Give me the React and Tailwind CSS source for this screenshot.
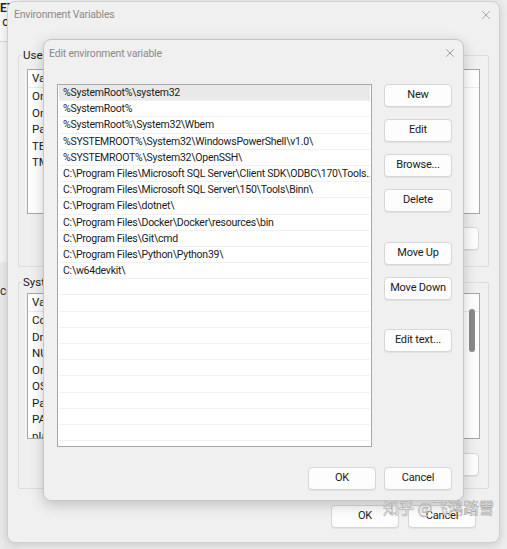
import { X } from 'lucide-react';

const paths = [
    '%SystemRoot%\\system32',
    '%SystemRoot%',
    '%SystemRoot%\\System32\\Wbem',
    '%SYSTEMROOT%\\System32\\WindowsPowerShell\\v1.0\\',
    '%SYSTEMROOT%\\System32\\OpenSSH\\',
    'C:\\Program Files\\Microsoft SQL Server\\Client SDK\\ODBC\\170\\Tools...',
    'C:\\Program Files\\Microsoft SQL Server\\150\\Tools\\Binn\\',
    'C:\\Program Files\\dotnet\\',
    'C:\\Program Files\\Docker\\Docker\\resources\\bin',
    'C:\\Program Files\\Git\\cmd',
    'C:\\Program Files\\Python\\Python39\\',
    'C:\\w64devkit\\',
];

const userVars = ['OneDrive', 'OneDriveConsumer', 'Path', 'TEMP', 'TMP'];
const sysVars = ['ComSpec', 'DriverData', 'NUMBER_OF_PROCESSORS', 'OnlineServices', 'OS', 'Path', 'PATHEXT', 'platformcode'];

function Btn({ children, className = '' }) {
    return (
        <button className={`h-[23px] w-[68px] rounded-[4px] border border-[#d6d6d6] bg-[#fdfdfd] text-[11px] tracking-[-0.2px] text-[#1b1b1b] shadow-[0_1px_0_#e2e2e2] ${className}`}>
            {children}
        </button>
    );
}

function VarList({ vars, heightClass, scroll }) {
    return (
        <div className={`relative ${heightClass} overflow-hidden border border-[#a8a8a8] bg-white`}>
            <div className="flex h-[18px] items-end border-b border-[#ececec] pl-[4px] text-[11.5px] text-[#1b1b1b]">
                <span className="w-[150px]">Variable</span>
                <span>Value</span>
            </div>
            {vars.map((v) => (
                <div key={v} className="h-[16.5px] pl-[4px] text-[11.5px] leading-[16.5px] text-[#1b1b1b]">
                    {v}
                </div>
            ))}
            {scroll && (
                <div className="absolute right-[4px] top-[15px] h-[43px] w-[6px] rounded-[3px] bg-[#8a8a8a]" />
            )}
        </div>
    );
}

export default function App() {
    const rows = Array.from({ length: 23 }, (_, i) => paths[i] || '');

    return (
        <div className="relative h-[549px] w-[507px] overflow-hidden bg-[#ededed] font-['Roboto','Noto_Sans',sans-serif]">
            {/* window behind, only its edge shows */}
            <div className="absolute left-0 top-0 h-[549px] w-[20px] bg-[#e9e9e9]">
                <div className="h-[42px] border-b border-[#d8d8d8] bg-[#f8f8f8] text-right text-[12px] leading-[14px] text-[#222]">
                    <div className="pr-[11px] pt-[1px] font-semibold">ET</div>
                    <div className="pr-[11px]">o</div>
                </div>
                <div className="h-[220px] bg-[#f4f4f4]" />
                <div className="pr-[12px] pt-[20px] text-right text-[12px] text-[#333]">ce</div>
            </div>

            {/* Environment Variables */}
            <div className="absolute left-[7px] top-[1px] flex h-[542px] w-[493px] flex-col rounded-[8px] border border-[#cfcfcf] bg-[#f0f0f0] shadow-[0_2px_8px_rgba(0,0,0,0.15)]">
                <div className="flex h-[26px] shrink-0 items-center justify-between pl-[6px] pr-[6px]">
                    <span className="text-[10.5px] tracking-[-0.2px] text-[#8a8a8a]">Environment Variables</span>
                    <X className="h-[14px] w-[14px] text-[#8a8a8a]" strokeWidth={1.2} />
                </div>

                <fieldset className="mx-[10px] mt-[21px] h-[218px] rounded-[2px] border border-[#dcdcdc] px-[8px] pb-0">
                    <legend className="ml-[-5px] px-[1px] text-[11.5px] leading-[12px] text-[#1b1b1b]">User variables for user</legend>
                    <div className="mt-[8px]">
                        <VarList vars={userVars} heightClass="h-[145px]" />
                    </div>
                    <div className="mt-[13px] flex justify-end gap-[8px] pr-[1px]">
                        <Btn>New...</Btn>
                        <Btn>Edit...</Btn>
                        <Btn>Delete</Btn>
                    </div>
                </fieldset>

                <fieldset className="mx-[10px] mt-[9px] h-[213px] rounded-[2px] border border-[#dcdcdc] px-[8px]">
                    <legend className="ml-[-5px] px-[1px] text-[11.5px] leading-[12px] text-[#1b1b1b]">System variables</legend>
                    <div className="mt-[5px]">
                        <VarList vars={sysVars} heightClass="h-[146px]" scroll />
                    </div>
                    <div className="mt-[14px] flex justify-end gap-[8px] pr-[1px]">
                        <Btn>New...</Btn>
                        <Btn>Edit...</Btn>
                        <Btn>Delete</Btn>
                    </div>
                </fieldset>

                <div className="mt-[16px] flex justify-end gap-[9px] pr-[23px]">
                    <Btn>OK</Btn>
                    <Btn>Cancel</Btn>
                </div>
            </div>

            {/* Edit environment variable */}
            <div className="absolute left-[43px] top-[39px] flex h-[462px] w-[421px] flex-col rounded-[8px] border border-[#c6c6c6] bg-[#f0f0f0] shadow-[0_4px_14px_rgba(0,0,0,0.2)]">
                <div className="flex h-[44px] shrink-0 items-start justify-between pl-[5px] pr-[6px] pt-[6px]">
                    <span className="text-[10.5px] tracking-[-0.2px] text-[#8a8a8a]">Edit environment variable</span>
                    <X className="h-[14px] w-[14px] text-[#7a7a7a]" strokeWidth={1.2} />
                </div>

                <div className="flex gap-[12px] pl-[13px]">
                    <div className="h-[363px] w-[315px] overflow-hidden border border-[#a8a8a8] bg-white px-[1px]">
                        {rows.map((p, i) => (
                            <div
                                key={i}
                                className={`h-[16.2px] whitespace-nowrap overflow-hidden border-b border-[#f1f1f1] pl-[4px] text-[10.5px] tracking-[-0.25px] leading-[15.5px] text-[#1b1b1b] ${i === 0 ? 'bg-[#e9e9e9]' : ''}`}
                            >
                                {p}
                            </div>
                        ))}
                    </div>
                    <div className="flex flex-col">
                        <Btn>New</Btn>
                        <Btn className="mt-[12px]">Edit</Btn>
                        <Btn className="mt-[12px]">Browse...</Btn>
                        <Btn className="mt-[12px]">Delete</Btn>
                        <Btn className="mt-[30px]">Move Up</Btn>
                        <Btn className="mt-[12px]">Move Down</Btn>
                        <Btn className="mt-[29px]">Edit text...</Btn>
                    </div>
                </div>

                <div className="mt-[20px] flex justify-end gap-[8px] pr-[11px]">
                    <Btn>OK</Btn>
                    <Btn>Cancel</Btn>
                </div>
            </div>

            {/* watermark */}
            <div className="absolute left-[383px] top-[496px] whitespace-nowrap text-[15.5px] text-white/90 [-webkit-text-stroke:0.5px_#9a9a9a] font-['Noto_Sans_CJK_SC',sans-serif]">
                知乎 @飞鸿踏雪
            </div>
        </div>
    );
}
